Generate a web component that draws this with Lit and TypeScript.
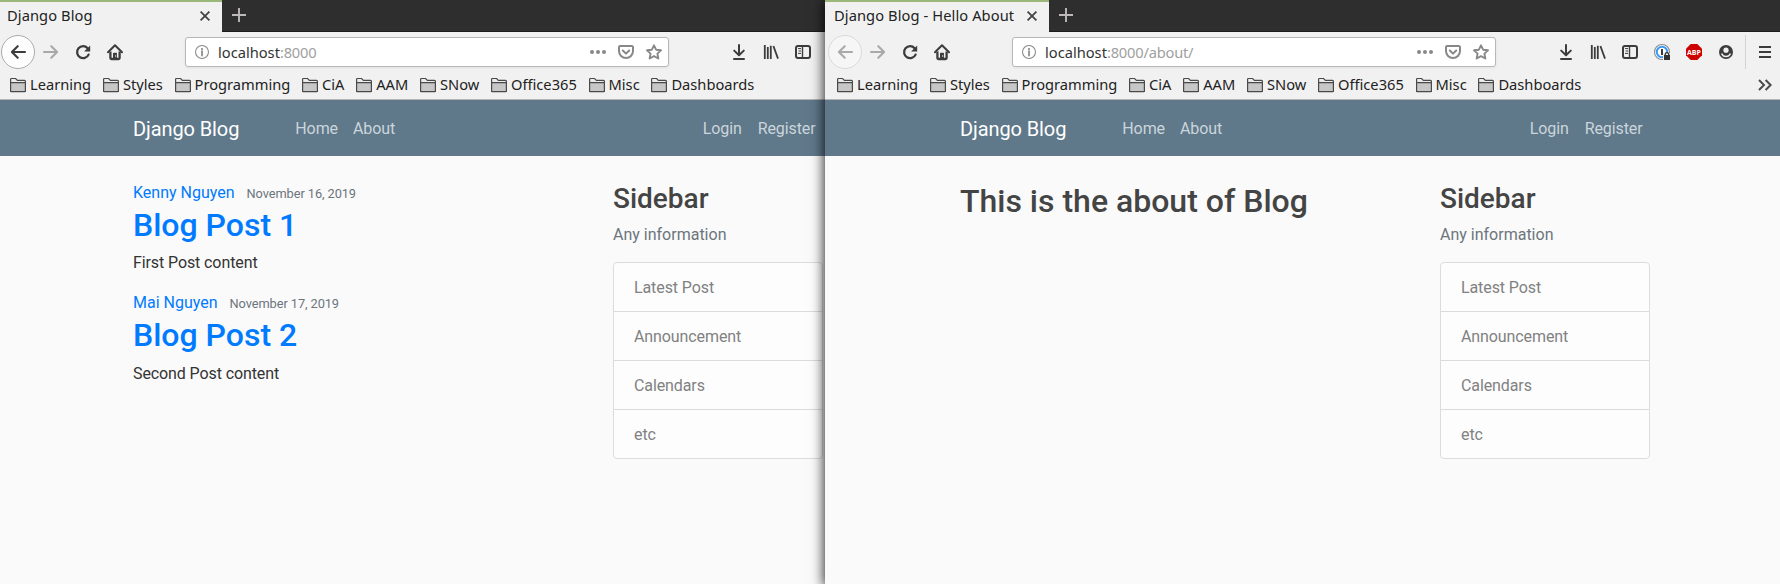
import { LitElement, html, css, svg, nothing, TemplateResult } from "lit";
import { customElement, property } from "lit/decorators.js";

const glyphs: Record<string, TemplateResult> = {
  back: svg`<path d="M15 8H2.2M7.7 2.2 1.9 8l5.8 5.8" class="s" stroke-width="2.1" stroke-linecap="round" stroke-linejoin="round"/>`,
  forward: svg`<path d="M1 8h12.8M8.3 2.2 14.1 8l-5.8 5.8" class="s" stroke-width="2.1" stroke-linecap="round" stroke-linejoin="round"/>`,
  reload: svg`<path d="M13.6 10.6A6 6 0 1 1 12.6 4.2" class="s" stroke-width="2.3" stroke-linecap="round"/><path d="M15.2 1.4v6.1H9.1z" class="f"/>`,
  home: svg`<path d="M1 8.2 8 1.3l7 6.9" class="s" stroke-width="2" stroke-linecap="round" stroke-linejoin="round"/><path d="M3.4 7.5V14a1 1 0 0 0 1 1h7.2a1 1 0 0 0 1-1V7.5" class="s" stroke-width="2.3"/><path d="M6 15V9.5a.8.8 0 0 1 .8-.8h2.4a.8.8 0 0 1 .8.8V15z" class="f"/><path d="M8.2 11.3h1v1.4h-1z" fill="#f1f1f1"/>`,
  info: svg`<circle cx="8" cy="8" r="7.4" class="s" stroke-width="1.2"/><circle cx="8" cy="4.6" r="1.25" class="f"/><path d="M8 7v5" class="s" stroke-width="2" stroke-linecap="round"/>`,
  dots: svg`<circle cx="2" cy="8" r="2" class="f"/><circle cx="8" cy="8" r="2" class="f"/><circle cx="14" cy="8" r="2" class="f"/>`,
  pocket: svg`<path d="M2.2 2h11.6a1.2 1.2 0 0 1 1.2 1.2V7A7 7 0 0 1 1 7V3.2A1.2 1.2 0 0 1 2.2 2z" class="s" stroke-width="2"/><path d="M4.8 6.5 8 9.6l3.2-3.1" class="s" stroke-width="2" stroke-linecap="round" stroke-linejoin="round"/>`,
  star: svg`<path d="m8 1.3 2.1 4.4 4.9.6-3.6 3.3.95 4.9L8 12.1l-4.35 2.4.95-4.9L1 6.3l4.9-.6z" class="s" stroke-width="1.9" stroke-linejoin="round"/>`,
  download: svg`<path d="M8 1v9.5M3.2 6.6 8 11.3l4.8-4.7" class="s" stroke-width="2" stroke-linecap="round" stroke-linejoin="round"/><path d="M3 15h10" class="s" stroke-width="2" stroke-linecap="round"/>`,
  library: svg`<path d="M1.8 1v14M4.8 3v12M7.8 1.8V15M10.4 2 15 14.6" class="s" stroke-width="1.8"/>`,
  sidebar: svg`<rect x="1" y="2" width="14" height="12" rx="2" class="s" stroke-width="2"/><path d="M7.5 2v12" class="s" stroke-width="1.4"/><path d="M3 4.6h3M3.6 7h2.4M3 9.4h3" class="s" stroke-width="1"/>`,
  password: svg`<circle cx="8" cy="8" r="7.5" fill="#fff" stroke="#8a8a8a" stroke-width="1.1"/><circle cx="8" cy="8" r="5.2" fill="#fff" stroke="#3b9bf4" stroke-width="2"/><path d="M8 5v6" stroke="#3c3c3c" stroke-width="2"/><path d="M9 9h7v7H9z" fill="#f1f1f1"/><path d="M10 11h6v5h-6z" fill="#333"/><path d="M11.2 11.5v-1a1.8 1.8 0 0 1 3.6 0v1" fill="none" stroke="#333" stroke-width="1.3"/>`,
  blocker: svg`<path d="M4.7 0h6.6L16 4.7v6.6L11.3 16H4.7L0 11.3V4.7z" fill="#cf0000"/><text x="8" y="10.8" text-anchor="middle" textLength="14" lengthAdjust="spacingAndGlyphs" class="abp">ABP</text>`,
  account: svg`<circle cx="8" cy="8" r="7" class="f"/><circle cx="8" cy="6.2" r="2.6" fill="#f1f1f1"/><path d="M3.6 9.4a4.7 4.7 0 0 0 8.8 0" fill="none" stroke="#f1f1f1" stroke-width="1.4"/>`,
  menu: svg`<path d="M2 3h12M2 8h12M2 13h12" class="s" stroke-width="2"/>`,
  more: svg`<path d="m2 3 5 5-5 5M8.6 3l5 5-5 5" class="s" stroke-width="2"/>`,
  close: svg`<path d="m3.6 3.6 8.8 8.8M12.4 3.6l-8.8 8.8" class="s" stroke-width="1.8"/>`,
  plus: svg`<path d="M8 1v14M1 8h14" class="s" stroke-width="1.9"/>`,
  folder: svg`<path d="M.6 14.4V2.3a.8.8 0 0 1 .8-.8h4.2l1.8 1.9h7.2a.8.8 0 0 1 .8.8v10.2z" fill="#ececec" class="o"/><path d="M.6 5.6h14.8V14a.6.6 0 0 1-.6.6H1.2a.6.6 0 0 1-.6-.6z" fill="#c7c7c7" class="o"/>`,
};

@customElement("ui-icon")
export class UiIcon extends LitElement {
  @property() name = "";
  static styles = css`
    :host { display: block; width: 16px; height: 16px; flex: none; }
    svg { display: block; width: 100%; height: 100%; overflow: visible; }
    .s { fill: none; stroke: currentColor; }
    .f { fill: currentColor; }
    .o { stroke: #4a4a4a; stroke-width: 1.2; }
    .abp { font: 700 7.5px "Open Sans", sans-serif; fill: #fff; }
  `;
  render() {
    return html`<svg viewBox="0 0 16 16">${glyphs[this.name] ?? nothing}</svg>`;
  }
}

const folders = ["Learning", "Styles", "Programming", "CiA", "AAM", "SNow", "Office365", "Misc", "Dashboards"];

@customElement("browser-window")
export class BrowserWindow extends LitElement {
  @property() heading = "";
  @property() path = "";
  @property({ type: Boolean }) canGoBack = false;

  static styles = css`
    :host { display: flex; flex-direction: column; background: #fafafa; color: #3c3c3c; font: 14.67px/20px "Noto Sans", sans-serif; }
    .tabs { display: flex; height: 32px; background: #2e2e2e; box-shadow: inset 0 -1px #1c1c1c; }
    .tab { box-sizing: border-box; width: 224px; padding: 2px 9px 0 9px; display: flex; align-items: center; justify-content: space-between; background: #f1f1f1; border-top: 2px solid #9ab87a; color: #222; white-space: nowrap; }
    .tab span { margin-top: -6px; letter-spacing: 0.09px; }
    .tab ui-icon { color: #444; margin-top: -4px; }
    .new { width: 16px; height: 16px; margin: 7px 0 0 9px; color: #bdb9b9; }
    .bar { display: flex; align-items: center; height: 40px; background: #f1f1f1; padding-left: 3px; }
    .back { box-sizing: border-box; width: 34px; height: 34px; border: 1px solid #dadada; border-radius: 50%; background: #f6f6f6; display: grid; place-items: center; color: #aaa; }
    .back.on { background: #fdfdfd; border-color: #ababab; color: #3c3c3c; }
    .nav { display: flex; gap: 16px; margin-left: 8px; width: 142px; }
    .off { color: #a9a9a9; }
    .url { box-sizing: border-box; width: 484px; height: 30px; padding: 0 6px 0 9px; display: flex; align-items: center; background: #fff; border: 1px solid #b8b8b8; border-radius: 3px; box-shadow: 0 1px 3px #0001; color: #888; }
    .url .info { width: 14px; height: 14px; }
    .addr { flex: 1; margin-left: 9px; color: #a0a0a0; letter-spacing: -0.2px; }
    .addr b { font-weight: 400; color: #333; letter-spacing: 0; }
    .acts { display: flex; gap: 12px; }
    .tools { display: flex; gap: 16px; margin-left: 62px; }
    .menu { box-sizing: border-box; height: 34px; margin-left: 11px; padding: 9px 0 0 11px; border-left: 1px solid #d2d2d2; }
    .marks { display: flex; align-items: center; height: 28px; padding: 0 12px; background: #f1f1f1; gap: 11.75px; border-bottom: 1px solid #b5b5b5; color: #222; box-sizing: border-box; }
    .mark { display: flex; align-items: center; gap: 4px; padding-bottom: 3px; }
    .mark ui-icon { margin-top: 1px; }
    .more { margin-left: auto; margin-bottom: 2px; color: #4a4a4a; }
    .page { flex: 1; font: 16px/24px Roboto, sans-serif; letter-spacing: -0.1px; color: #333; }
    .head { height: 56px; background: #5f788a; color: #cbd5db; }
    .wrap { box-sizing: border-box; width: 720px; margin: 0 auto; padding: 0 15px; display: flex; }
    .head .wrap { height: 56px; align-items: center; gap: 16px; padding-top: 2px; padding-right: 22.5px; }
    .brand { color: #fff; font-size: 20px; line-height: 30px; margin-right: 40px; }
    .first { margin-right: -1px; }
    .login { margin-left: auto; }
    .body { padding-top: 24px; }
    .main { width: 450px; margin-right: 30px; }
    .side { width: 210px; }
  `;

  render() {
    return html`
      <div class="tabs">
        <div class="tab"><span>${this.heading}</span><ui-icon name="close"></ui-icon></div>
        <ui-icon class="new" name="plus"></ui-icon>
      </div>
      <div class="bar">
        <div class="back ${this.canGoBack ? "on" : ""}"><ui-icon name="back"></ui-icon></div>
        <div class="nav">
          <ui-icon class="off" name="forward"></ui-icon><ui-icon name="reload"></ui-icon><ui-icon name="home"></ui-icon>
        </div>
        <div class="url">
          <ui-icon class="info" name="info"></ui-icon>
          <div class="addr"><b>localhost</b>${this.path}</div>
          <div class="acts"><ui-icon name="dots"></ui-icon><ui-icon name="pocket"></ui-icon><ui-icon name="star"></ui-icon></div>
        </div>
        <div class="tools">
          ${["download", "library", "sidebar", "password", "blocker", "account"].map((n) => html`<ui-icon name=${n}></ui-icon>`)}
        </div>
        <div class="menu"><ui-icon name="menu"></ui-icon></div>
      </div>
      <div class="marks">
        ${folders.map((f) => html`<div class="mark"><ui-icon name="folder"></ui-icon><span>${f}</span></div>`)}
        <ui-icon class="more" name="more"></ui-icon>
      </div>
      <div class="page">
        <div class="head"><div class="wrap">
          <span class="brand">Django Blog</span><span class="first">Home</span><span>About</span>
          <span class="login">Login</span><span>Register</span>
        </div></div>
        <div class="wrap body">
          <div class="main"><slot></slot></div>
          <side-panel class="side"></side-panel>
        </div>
      </div>`;
  }
}

@customElement("side-panel")
export class SidePanel extends LitElement {
  static styles = css`
    :host { display: block; }
    .title { font-size: 28px; font-weight: 500; line-height: 34px; color: #444; margin: 2px 0 7px; letter-spacing: 0; }
    .note { color: #6c757d; margin-bottom: 15px; letter-spacing: 0; }
    .list { border: 1px solid #dcdcdc; border-radius: 4px; background: #fdfdfd; color: #818182; }
    .row { padding: 12.5px 20px 11.5px; }
    .row + .row { border-top: 1px solid #dcdcdc; }
  `;
  render() {
    return html`
      <div class="title">Sidebar</div>
      <div class="note">Any information</div>
      <div class="list">${["Latest Post", "Announcement", "Calendars", "etc"].map((r) => html`<div class="row">${r}</div>`)}</div>`;
  }
}

const posts = [
  { author: "Kenny Nguyen", date: "November 16, 2019", title: "Blog Post 1", content: "First Post content" },
  { author: "Mai Nguyen", date: "November 17, 2019", title: "Blog Post 2", content: "Second Post content" },
];

@customElement("app-root")
export class AppRoot extends LitElement {
  static styles = css`
    :host { display: block; position: relative; width: 1780px; height: 584px; overflow: hidden; }
    .win { position: absolute; top: 0; width: 960px; height: 584px; }
    .home { left: -2px; }
    .about { left: 825px; box-shadow: 0 2px 12px 1px rgba(0, 0, 0, 0.85); }
    .post { font: 16px/24px Roboto, sans-serif; color: #333; padding-top: 1px; margin-bottom: 15px; }
    .meta { display: flex; align-items: baseline; gap: 12px; color: #007bff; letter-spacing: 0; }
    .date { font-size: 12.8px; color: #6c757d; letter-spacing: -0.08px; }
    .title { font-size: 32px; font-weight: 500; line-height: 38.4px; color: #007bff; margin-bottom: 7px; letter-spacing: 0; }
    .big { font: 500 32px/38.4px Roboto, sans-serif; color: #444; margin-top: 2px; letter-spacing: 0; }
  `;
  render() {
    return html`
      <browser-window class="win home" heading="Django Blog" path=":8000" .canGoBack=${true}>
        ${posts.map((p) => html`<div class="post">
          <div class="meta"><span>${p.author}</span><span class="date">${p.date}</span></div>
          <div class="title">${p.title}</div>
          <div>${p.content}</div>
        </div>`)}
      </browser-window>
      <browser-window class="win about" heading="Django Blog - Hello About" path=":8000/about/">
        <div class="big">This is the about of Blog</div>
      </browser-window>`;
  }
}
